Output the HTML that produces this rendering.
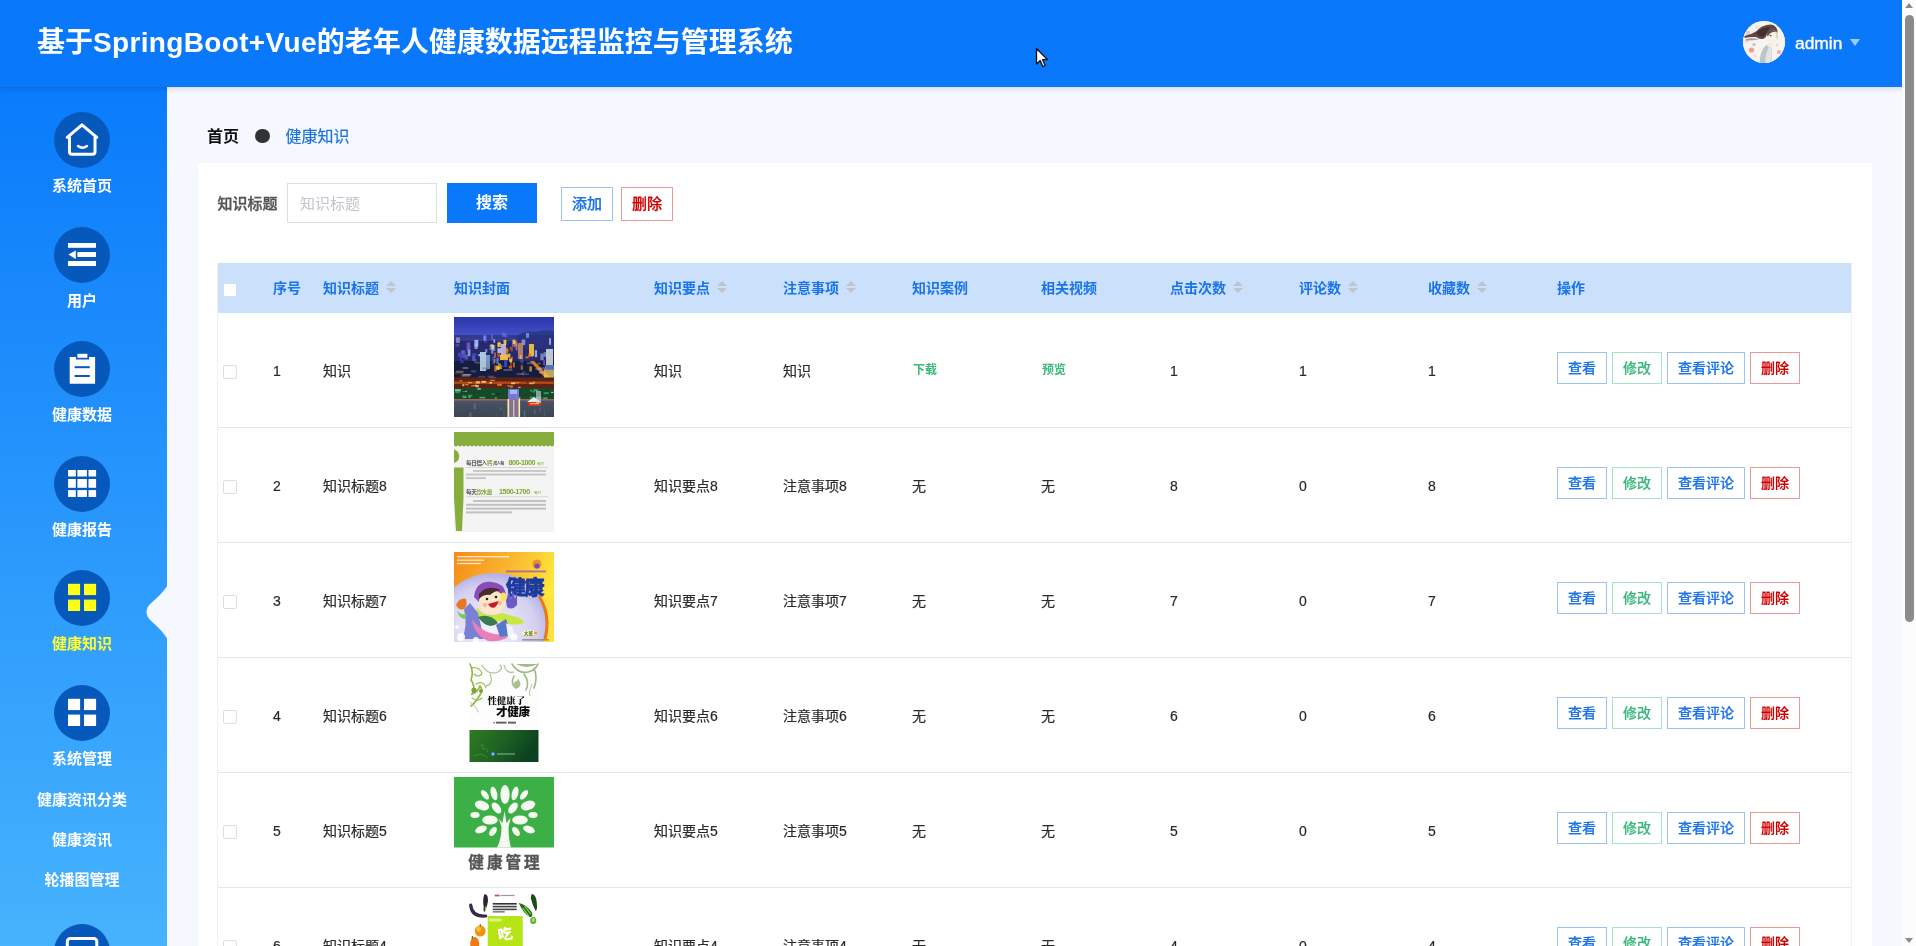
<!DOCTYPE html>
<html lang="zh-CN">
<head>
<meta charset="utf-8">
<title>基于SpringBoot+Vue的老年人健康数据远程监控与管理系统</title>
<style>
*{box-sizing:border-box;margin:0;padding:0}
html,body{width:1916px;height:946px;overflow:hidden;background:#f5f8fe}
body{position:relative;font-family:"Liberation Sans","Noto Sans CJK SC",sans-serif;font-size:14px;color:#333}
i{font-style:normal}
/* header */
#hdr{position:absolute;left:0;top:0;width:1902px;height:87px;background:#0978fb;box-shadow:0 1px 6px rgba(0,0,0,.17);z-index:5}
#title{position:absolute;left:37px;top:0;height:87px;line-height:86px;font-size:28px;font-weight:700;color:#fff;white-space:nowrap}
#title .lat{letter-spacing:.34px}
#avatar{position:absolute;left:1743px;top:21px;width:42px;height:42px;border-radius:50%;overflow:hidden;background:#f4ece8}
#avatar svg{display:block}
#uname{position:absolute;left:1795px;top:0;height:87px;line-height:86px;font-size:17.4px;font-weight:400;color:#fff;-webkit-text-stroke:.35px #fff}
#ucaret{position:absolute;left:1850px;top:39px;width:0;height:0;border-left:5px solid transparent;border-right:5px solid transparent;border-top:7px solid rgba(255,255,255,.62)}
/* scrollbar */
#sb{position:absolute;left:1902px;top:0;width:14px;height:946px;background:#fcfcfc;z-index:9}
#sb .thumb{position:absolute;left:3px;top:15px;width:9px;height:607px;border-radius:5px;background:#8b8b8b}
#sb .up{position:absolute;left:3px;top:3px;width:0;height:0;border-left:4.5px solid transparent;border-right:4.5px solid transparent;border-bottom:5px solid #8b8b8b}
/* sidebar */
#side{position:absolute;left:0;top:87px;width:167px;height:859px;background:linear-gradient(180deg,#0a7bfb 0%,#47b3fd 100%);z-index:2;overflow:hidden}
#side svg.ic{position:absolute;left:0;top:0}
.ml{position:absolute;left:0;width:164px;text-align:center;font-size:15px;font-weight:700;color:#fff;line-height:20px;white-space:nowrap}
.ml.on{color:#ffff33}
/* content */
#bc{position:absolute;left:207px;top:125px;height:24px;line-height:24px;font-size:16px;white-space:nowrap}
#bc b{color:#111;font-weight:700}
#bc .dot{position:absolute;left:48px;top:3.6px;width:14.6px;height:14.6px;border-radius:50%;background:#333}
#bc .cur{position:absolute;left:78.5px;top:0;color:#1a73d9;-webkit-text-stroke:.2px}
#card{position:absolute;left:198px;top:163px;width:1674px;height:800px;background:#fff}
#form{position:absolute;left:0;top:0;width:100%;height:80px}
#form label{position:absolute;left:19.5px;top:21px;height:40px;line-height:40px;font-size:15px;font-weight:500;color:#555;-webkit-text-stroke:.35px}
#form .inp{position:absolute;left:89px;top:20px;width:150px;height:40px;border:1px solid #dcdfe6;line-height:40px;padding-left:12px;color:#c0c4cc;font-size:15px}
#form .sbtn{position:absolute;left:249px;top:20px;width:90px;height:40px;background:#0978fb;color:#fff;font-size:16px;font-weight:700;text-align:center;line-height:40px}
#form .abtn{position:absolute;top:24px;width:52px;height:34px;border:1px solid;text-align:center;line-height:32px;font-size:15px;font-weight:500;background:#fff;-webkit-text-stroke:.25px}
#form .add{left:363px;color:#1a73e8;border-color:#9cc2f5}
#form .del{left:423px;color:#cc0000;border-color:#e79a9a}
/* table */
#tbl{position:absolute;left:19px;top:100px;width:1635px;height:760px;border-left:1px solid #eef1f7;border-right:1px solid #eef1f7}
.thead{position:absolute;left:0;top:0;width:1633px;height:50px;background:#cbe1fb}
.th{position:absolute;top:0;height:50px;line-height:51px;font-weight:700;color:#1a73e8;white-space:nowrap}
.sort{display:inline-block;position:relative;width:24px;height:34px;vertical-align:middle}
.sort i{position:absolute;left:7px;width:0;height:0;border:5px solid transparent}
.sort .up{top:4px;border-bottom-color:#c0c4cc}
.sort .dn{bottom:8px;border-top-color:#c0c4cc}
.cb{position:absolute;width:14px;height:14px;background:#fff;border:1px solid #dedede;border-radius:2px}
.hcb{left:6px;top:21px;width:12px;height:12px;border:0;border-radius:0}
.rcb{left:5px;top:52px}
.tr{position:absolute;left:0;width:1633px;height:115px;border-bottom:1px solid #dfe8f5}
.td{position:absolute;top:0;height:115px;line-height:117px;white-space:nowrap;color:#2a2a2a;-webkit-text-stroke:.2px #2a2a2a}
.td.lk{font-size:12px;font-weight:700;color:#3cb87e;line-height:115px;-webkit-text-stroke:0}
.pic{position:absolute;left:236px;top:4px;width:100px;height:100px;overflow:hidden}
.pic svg{display:block}
.ops{position:absolute;left:1339px;top:39px;height:32px;white-space:nowrap;font-size:0}
.btn{display:inline-block;height:32px;line-height:30px;padding:0 10px;border:1px solid;font-size:14px;font-weight:500;margin-right:5px;background:#fff;vertical-align:top;-webkit-text-stroke:.2px}
.btn.b{color:#1a73e8;border-color:#9cc2f5}
.btn.g{color:#3cb87e;border-color:#a8e2c6}
.btn.r{color:#cc0000;border-color:#e79a9a}

#hdr,#side,#main{will-change:transform}
#main{position:absolute;left:0;top:0;width:1902px;height:946px}
#cursor{position:absolute;left:1035px;top:47px;z-index:20}
#sb .dn{position:absolute;left:3px;top:938px;width:0;height:0;border-left:4.5px solid transparent;border-right:4.5px solid transparent;border-top:5px solid #8b8b8b}

</style>
</head>
<body>
<div id="hdr">
  <div id="title">基于<span class="lat">SpringBoot+Vue</span>的老年人健康数据远程监控与管理系统</div>
  <div id="avatar"><svg width="42" height="42" viewBox="0 0 42 42"><defs><filter id="avb" x="-10%" y="-10%" width="120%" height="120%"><feGaussianBlur stdDeviation=".7"/></filter></defs><rect width="42" height="42" fill="#f7f3f1"/><g filter="url(#avb)"><circle cx="5" cy="12" r="2.2" fill="#f0b8b4" opacity=".8"/><circle cx="8.5" cy="29" r="2.6" fill="#ee8f88" opacity=".85"/><circle cx="36" cy="31" r="2" fill="#ee9a92" opacity=".8"/><circle cx="26" cy="33.5" r="1.5" fill="#e87878" opacity=".8"/><circle cx="3.5" cy="20" r="2" fill="#f4cfc8" opacity=".8"/><circle cx="11" cy="23.5" r="1.6" fill="#7a8aa8" opacity=".5"/><circle cx="14" cy="6" r="2" fill="#f6dcd8" opacity=".7"/><circle cx="34" cy="24" r="1.5" fill="#f4c8c0" opacity=".7"/><circle cx="12" cy="35" r="2" fill="#f8dcd4" opacity=".8"/><path d="M1.5 15 Q8 13.5 13 10.5 Q19 3.5 28 3.5 Q35 5 34.5 12 Q31 7.5 27 9 Q25 15 21 17.5 Q17 19 13 16 Q7 15.5 1.5 17 Z" fill="#5c4644"/><path d="M13 12 Q19 6 27 6 Q25 12 20 15.5 Q16 16 13 12 Z" fill="#43302f"/><path d="M3 18 Q10 16.5 16 18.5 Q10 19.5 3 19.5 Z" fill="#8a7674" opacity=".7"/><ellipse cx="28.3" cy="16" rx="5.2" ry="6.6" fill="#faf1e6"/><path d="M23.5 11 Q28 6.5 34 11 Q30 10 27 12.5 Q25.5 15 24 15 Z" fill="#6a5048"/><path d="M33 10 Q36 14 34.5 20 Q33 16 32.5 12 Z" fill="#d8c8a8" opacity=".8"/><ellipse cx="27.6" cy="14.6" rx="1.1" ry=".7" fill="#3a3030"/><path d="M16.5 42 Q17 29 23.5 24 L29 25.5 Q28 33 29 42 Z" fill="#b9c5c8"/><path d="M22 42 Q22.5 32 26 26 L29 26.5 Q27.5 35 28.5 42 Z" fill="#dfe5e4"/><path d="M25 22 L30 23 L29 27 L24.5 25.5 Z" fill="#f6ece2"/></g></svg></div>
  <div id="uname">admin</div>
  <div id="ucaret"></div>
</div>
<svg id="cursor" width="14" height="21" viewBox="0 0 14 21"><path d="M1.5 1.5 V17 L5.2 13.6 L7.8 19.6 L10.2 18.5 L7.6 12.7 H12.6 Z" fill="#fff" stroke="#111" stroke-width="1.3" stroke-linejoin="round"/></svg>
<div id="sb"><div class="up"></div><div class="thumb"></div><div class="dn"></div></div>
<div id="side">
<svg class="ic" width="167" height="859" viewBox="0 87 167 859">
  <g fill="#0659bb">
    <circle cx="82" cy="140" r="28"/><circle cx="82" cy="255" r="28"/><circle cx="82" cy="369" r="28"/>
    <circle cx="82" cy="484" r="28"/><circle cx="82" cy="598" r="28"/><circle cx="82" cy="713" r="28"/>
    <circle cx="82" cy="952" r="28"/>
  </g>
  <!-- home -->
  <g fill="none" stroke="#fff" stroke-width="3" stroke-linecap="round" stroke-linejoin="round">
    <path d="M67.2 137.4 L82 124.8 L96.8 137.4"/>
    <path d="M69.5 137.5 V151.8 Q69.5 154.3 72 154.3 H92.5 Q95 154.3 95 151.8 V137.5"/>
    <path d="M78 146 Q82.5 149.5 87 146" stroke-width="2.4"/>
  </g>
  <!-- fold -->
  <g fill="#fff">
    <rect x="68" y="243" width="28" height="4.8"/><rect x="77.4" y="252" width="18.6" height="5"/><rect x="68" y="261" width="28" height="5"/>
    <path d="M68.4 254.6 L75.8 250.4 V258.9 Z"/>
  </g>
  <!-- order -->
  <g fill="#fff">
    <rect x="77.4" y="353.8" width="10" height="4"/>
    <path d="M69.7 357 H76 V359.5 H89 V357 H95.1 V383.7 H69.7 Z"/>
  </g>
  <g fill="#0659bb"><rect x="74.6" y="366.2" width="15.2" height="2"/><rect x="74.6" y="375" width="15.2" height="2"/></g>
  <!-- grid -->
  <g fill="#fff">
    <rect x="68.1" y="470" width="7.7" height="6.5"/><rect x="77.4" y="470" width="9.5" height="6.5"/><rect x="88.5" y="470" width="7.6" height="6.5"/>
    <rect x="68.1" y="479" width="7.7" height="8.8"/><rect x="77.4" y="479" width="9.5" height="8.8"/><rect x="88.5" y="479" width="7.6" height="8.8"/>
    <rect x="68.1" y="490.1" width="7.7" height="6.9"/><rect x="77.4" y="490.1" width="9.5" height="6.9"/><rect x="88.5" y="490.1" width="7.6" height="6.9"/>
  </g>
  <!-- menu active -->
  <g fill="#ffff1a">
    <rect x="68" y="583.8" width="12.1" height="11.3"/><rect x="84" y="583.8" width="12.1" height="11.3"/>
    <rect x="68" y="599.6" width="12.1" height="11.4"/><rect x="84" y="599.6" width="12.1" height="11.4"/>
  </g>
  <g fill="#fff">
    <rect x="68" y="698.8" width="12.1" height="11.3"/><rect x="84" y="698.8" width="12.1" height="11.3"/>
    <rect x="68" y="714.6" width="12.1" height="11.4"/><rect x="84" y="714.6" width="12.1" height="11.4"/>
  </g>
  <!-- monitor -->
  <rect x="67.3" y="938.5" width="29.5" height="22" rx="3" fill="none" stroke="#fff" stroke-width="3"/>
  <!-- notch -->
  <path d="M167.5 585.5 C160 597 150.5 602 147.5 607.5 Q145.5 612 147.5 616.5 C150.5 622 160 627 167.5 639 Z" fill="#f5f8fe"/>
</svg>
<div class="ml" style="top:89px">系统首页</div>
<div class="ml" style="top:204px">用户</div>
<div class="ml" style="top:318px">健康数据</div>
<div class="ml" style="top:433px">健康报告</div>
<div class="ml on" style="top:547px">健康知识</div>
<div class="ml" style="top:662px">系统管理</div>
<div class="ml" style="top:703px">健康资讯分类</div>
<div class="ml" style="top:743px">健康资讯</div>
<div class="ml" style="top:783px">轮播图管理</div>
</div>

<div id="main">
  <div id="bc"><b>首页</b><i class="dot"></i><span class="cur">健康知识</span></div>
  <div id="card">
    <div id="form">
      <label>知识标题</label>
      <div class="inp"><span>知识标题</span></div>
      <div class="sbtn">搜索</div>
      <div class="abtn add">添加</div>
      <div class="abtn del">删除</div>
    </div>
    <div id="tbl">
<div class="thead">
<span class="cb hcb"></span>
<span class="th" style="left:55px">序号</span>
<span class="th" style="left:105px">知识标题<i class="sort"><i class="up"></i><i class="dn"></i></i></span>
<span class="th" style="left:236px">知识封面</span>
<span class="th" style="left:436px">知识要点<i class="sort"><i class="up"></i><i class="dn"></i></i></span>
<span class="th" style="left:565px">注意事项<i class="sort"><i class="up"></i><i class="dn"></i></i></span>
<span class="th" style="left:694px">知识案例</span>
<span class="th" style="left:823px">相关视频</span>
<span class="th" style="left:952px">点击次数<i class="sort"><i class="up"></i><i class="dn"></i></i></span>
<span class="th" style="left:1081px">评论数<i class="sort"><i class="up"></i><i class="dn"></i></i></span>
<span class="th" style="left:1210px">收藏数<i class="sort"><i class="up"></i><i class="dn"></i></i></span>
<span class="th" style="left:1339px">操作</span>
</div>

<div class="tr" style="top:50px">
<span class="cb rcb"></span>
<span class="td" style="left:55px">1</span><span class="td" style="left:105px">知识</span>
<div class="pic"><svg width="100" height="100" viewBox="0 0 100 100"><defs><linearGradient id="sky" x1="0" y1="0" x2="0" y2="1"><stop offset="0" stop-color="#2a36a6"/><stop offset=".65" stop-color="#3f4cc4"/><stop offset="1" stop-color="#6a63c8"/></linearGradient><linearGradient id="riv" x1="0" y1="0" x2="0" y2="1"><stop offset="0" stop-color="#4a5568"/><stop offset="1" stop-color="#3b4652"/></linearGradient><filter id="b1" x="-5%" y="-5%" width="110%" height="110%"><feGaussianBlur stdDeviation=".6"/></filter></defs><rect width="100" height="100" fill="#1a2048"/><g filter="url(#b1)"><rect x="-3" y="-3" width="106" height="106" fill="#1a2048"/><rect width="100" height="24" fill="url(#sky)"/><path d="M62 20 Q70 13 80 15 Q90 12 100 14 V32 H70 Z" fill="#2b3a8c"/><rect y="18" width="100" height="30" fill="#2a2f7a" opacity=".75"/><rect y="44" width="100" height="18" fill="#171c3c" opacity=".9"/><rect x="43.4" y="31.2" width="3.8" height="4.8" fill="#c9d4ff" opacity="0.83"/><rect x="18.2" y="38.3" width="2.7" height="5.7" fill="#7f8cf0" opacity="0.49"/><rect x="29.1" y="17.6" width="3.5" height="6.2" fill="#5a6ee0" opacity="0.72"/><rect x="38" y="28.1" width="3.3" height="5.9" fill="#c9d4ff" opacity="0.46"/><rect x="50.7" y="16.7" width="2" height="3.5" fill="#5a6ee0" opacity="0.8"/><rect x="31.3" y="32.1" width="2" height="3.4" fill="#aab8ff" opacity="0.67"/><rect x="63.6" y="28.3" width="2.2" height="8" fill="#4c5ad6" opacity="0.49"/><rect x="24.4" y="37" width="2.8" height="2.2" fill="#c9d4ff" opacity="0.79"/><rect x="38.4" y="39.6" width="2.5" height="7.7" fill="#4c5ad6" opacity="0.76"/><rect x="20.5" y="41.9" width="1.6" height="4.3" fill="#8060d8" opacity="0.63"/><rect x="7" y="33.3" width="3.4" height="3.6" fill="#5a6ee0" opacity="0.59"/><rect x="1.5" y="26.9" width="3.8" height="2.8" fill="#8060d8" opacity="0.5"/><rect x="5.7" y="38.1" width="1.9" height="5.4" fill="#3d4bd0" opacity="0.68"/><rect x="94.6" y="37.3" width="2.5" height="4.3" fill="#3d4bd0" opacity="0.64"/><rect x="20.4" y="22.8" width="3.9" height="6.8" fill="#aab8ff" opacity="0.9"/><rect x="1.9" y="20.4" width="4" height="5.6" fill="#c9d4ff" opacity="0.5"/><rect x="95" y="21.2" width="2.1" height="6.6" fill="#aab8ff" opacity="0.82"/><rect x="37.1" y="17.2" width="2" height="5.8" fill="#5a6ee0" opacity="0.72"/><rect x="35.7" y="28.1" width="3.9" height="4.9" fill="#c9d4ff" opacity="0.51"/><rect x="37.1" y="33.2" width="2.3" height="3.4" fill="#c9d4ff" opacity="0.56"/><rect x="18.2" y="36.4" width="3.9" height="3.2" fill="#3d4bd0" opacity="0.85"/><rect x="57.9" y="27.2" width="1.8" height="2.2" fill="#aab8ff" opacity="0.56"/><rect x="67.6" y="22.5" width="3.6" height="5.6" fill="#aab8ff" opacity="0.68"/><rect x="89.2" y="43.3" width="1.8" height="4.9" fill="#8060d8" opacity="0.83"/><rect x="59" y="23.1" width="3.8" height="3.2" fill="#5a6ee0" opacity="0.48"/><rect x="39.5" y="22.2" width="1.6" height="3.7" fill="#c9d4ff" opacity="0.71"/><rect x="12.6" y="25.5" width="3.7" height="7.9" fill="#8060d8" opacity="0.78"/><rect x="50.1" y="42.5" width="3" height="7.5" fill="#3d4bd0" opacity="0.86"/><rect x="67.3" y="42.9" width="1.6" height="5.8" fill="#3d4bd0" opacity="0.48"/><rect x="29.9" y="19" width="1.7" height="4.7" fill="#aab8ff" opacity="0.78"/><rect x="86.4" y="36.4" width="3.3" height="6.8" fill="#aab8ff" opacity="0.61"/><rect x="65.8" y="41.1" width="3.7" height="4.5" fill="#4c5ad6" opacity="0.46"/><rect x="48" y="15.4" width="3.2" height="4.3" fill="#5a6ee0" opacity="0.72"/><rect x="7.7" y="33.5" width="4" height="7.3" fill="#8060d8" opacity="0.6"/><rect x="89.7" y="35.1" width="2.6" height="4.8" fill="#c9d4ff" opacity="0.49"/><rect x="72" y="15.9" width="3" height="4.9" fill="#7f8cf0" opacity="0.88"/><rect x="10.8" y="37.6" width="3.2" height="4.9" fill="#5a6ee0" opacity="0.62"/><rect x="13.7" y="32.7" width="2.8" height="6.5" fill="#aab8ff" opacity="0.75"/><rect x="42.4" y="40.9" width="2.3" height="6" fill="#7f8cf0" opacity="0.74"/><rect x="77.2" y="36.9" width="2" height="3.3" fill="#7f8cf0" opacity="0.71"/><rect x="30.4" y="18.9" width="2.7" height="7" fill="#4c5ad6" opacity="0.47"/><rect x="6.2" y="43.4" width="3.6" height="2.7" fill="#3d4bd0" opacity="0.57"/><rect x="20.6" y="27" width="3.1" height="5" fill="#aab8ff" opacity="0.77"/><rect x="80.8" y="33.1" width="2.3" height="7" fill="#aab8ff" opacity="0.84"/><rect x="4" y="35.6" width="2.9" height="3.9" fill="#4c5ad6" opacity="0.7"/><rect x="61.5" y="26.8" width="2" height="6.6" fill="#aab8ff" opacity="0.56"/><rect x="26" y="35" width="6" height="19" fill="#b9d6e8" opacity="0.9"/><rect x="32" y="38" width="4" height="14" fill="#8fb0d8" opacity="0.8"/><rect x="47" y="27" width="5" height="14" fill="#c8c8f0" opacity="0.85"/><rect x="92" y="32" width="7" height="16" fill="#cfd8d8" opacity="0.9"/><rect x="75" y="27" width="5" height="12" fill="#f0c040" opacity="0.95"/><rect x="64" y="26" width="5" height="16" fill="#d89060" opacity="0.8"/><rect x="56.8" y="39.6" width="2.2" height="4.3" fill="#e85010" opacity="0.81"/><rect x="57.2" y="32.3" width="1.4" height="2.4" fill="#ff6a10" opacity="0.65"/><rect x="51.6" y="37" width="1.3" height="2.5" fill="#ffd24a" opacity="0.77"/><rect x="40.3" y="48.5" width="2.4" height="6" fill="#ff8a18" opacity="0.71"/><rect x="60.1" y="24.4" width="3.3" height="4.8" fill="#ff8a18" opacity="0.73"/><rect x="36.1" y="27.5" width="3.2" height="1.5" fill="#ffe27a" opacity="0.78"/><rect x="66.7" y="48.4" width="2.3" height="4.4" fill="#ff8a18" opacity="0.59"/><rect x="44" y="46.3" width="3" height="5.7" fill="#ffb020" opacity="0.64"/><rect x="75.4" y="49.4" width="2.4" height="5.1" fill="#ffd24a" opacity="0.65"/><rect x="40.2" y="42.1" width="1.2" height="3.8" fill="#ffb020" opacity="0.73"/><rect x="40.4" y="35.6" width="1.3" height="5.1" fill="#ffb020" opacity="0.72"/><rect x="50.2" y="23" width="2.4" height="4.6" fill="#ff8a18" opacity="0.74"/><rect x="74.3" y="36.5" width="2.8" height="3.5" fill="#ff6a10" opacity="0.78"/><rect x="55" y="41.3" width="2.9" height="3.5" fill="#ffe27a" opacity="0.67"/><rect x="53.3" y="36.6" width="3.1" height="4" fill="#ffd24a" opacity="0.82"/><rect x="42.3" y="48.7" width="3.2" height="4.2" fill="#ffd24a" opacity="0.89"/><rect x="65.8" y="38" width="1.7" height="3.9" fill="#ffe27a" opacity="0.55"/><rect x="52.8" y="32.6" width="2.4" height="1.7" fill="#ff6a10" opacity="0.77"/><rect x="59.6" y="24.6" width="1.6" height="5.7" fill="#ff6a10" opacity="0.72"/><rect x="54.7" y="48.8" width="3.3" height="2.7" fill="#ff6a10" opacity="0.75"/><rect x="44.7" y="48.2" width="3.3" height="3.9" fill="#ffb020" opacity="0.63"/><rect x="71.4" y="39.3" width="3.3" height="2.1" fill="#ffb020" opacity="0.56"/><rect x="55.8" y="30" width="2.9" height="2.6" fill="#ff6a10" opacity="0.59"/><rect x="56.2" y="42.5" width="1.5" height="3.8" fill="#ffd24a" opacity="0.84"/><rect x="49.4" y="22.7" width="2.7" height="5.2" fill="#ffe27a" opacity="0.61"/><rect x="37.4" y="27.7" width="2.7" height="4.4" fill="#ffe27a" opacity="0.64"/><rect x="43.5" y="25.8" width="3.3" height="4.3" fill="#ffd24a" opacity="0.91"/><rect x="51.8" y="30.8" width="1.9" height="5.7" fill="#ff8a18" opacity="0.86"/><rect x="56.4" y="46.9" width="1.5" height="1.9" fill="#ff6a10" opacity="0.59"/><rect x="58.8" y="45.3" width="2.2" height="5.1" fill="#ff8a18" opacity="0.63"/><rect x="43.8" y="24.7" width="2.5" height="3.1" fill="#ffd24a" opacity="0.6"/><rect x="43.4" y="36.2" width="2.9" height="3.8" fill="#e85010" opacity="0.88"/><rect x="58.4" y="22.7" width="3" height="4.3" fill="#ffe27a" opacity="0.74"/><rect x="45.2" y="27.3" width="1.5" height="2.3" fill="#ff8a18" opacity="0.95"/><rect x="46" y="38" width="8" height="5" fill="#ffc030" opacity="0.95"/><path d="M76 44 L92 62 L98 62 L80 44 Z" fill="#ff8a20" opacity=".85"/><rect x="90" y="52" width="10" height="10" fill="#e8c860" opacity="0.8"/><rect x="91" y="48" width="9" height="5" fill="#5a7ac8" opacity="0.9"/><rect x="83.4" y="45.5" width="3.4" height="2.1" fill="#d8a070" opacity="0.38"/><rect x="8.7" y="50.3" width="5.6" height="1.4" fill="#c0c4d8" opacity="0.56"/><rect x="1.2" y="55.2" width="8.1" height="1.2" fill="#d8a070" opacity="0.48"/><rect x="33.3" y="58.7" width="6.6" height="1.1" fill="#8a90b0" opacity="0.46"/><rect x="7.6" y="57.5" width="8.3" height="2.1" fill="#d8a070" opacity="0.55"/><rect x="17.2" y="53.4" width="5" height="1.9" fill="#5a6088" opacity="0.67"/><rect x="67" y="56.4" width="7.9" height="1.5" fill="#5a6088" opacity="0.66"/><rect x="62.5" y="56.3" width="7.6" height="1.5" fill="#c0c4d8" opacity="0.37"/><rect x="30.8" y="51.5" width="3.1" height="1.4" fill="#8a90b0" opacity="0.43"/><rect x="85" y="54.7" width="5" height="1.8" fill="#c0c4d8" opacity="0.54"/><rect x="35.1" y="60" width="6.9" height="1.8" fill="#d8a070" opacity="0.69"/><rect x="2.1" y="53.8" width="7.4" height="1.3" fill="#d8a070" opacity="0.53"/><rect x="68.5" y="54.4" width="3.1" height="1.3" fill="#5a6088" opacity="0.67"/><rect x="49.5" y="52.1" width="8.8" height="1.7" fill="#8a90b0" opacity="0.57"/><rect x="72.9" y="45.2" width="6.6" height="1.9" fill="#8a90b0" opacity="0.49"/><rect x="84.5" y="50.2" width="8.8" height="2" fill="#8a90b0" opacity="0.5"/><rect x="44.5" y="48.6" width="5.4" height="1.4" fill="#5a6088" opacity="0.52"/><rect x="24.3" y="58.9" width="7" height="1.9" fill="#8a90b0" opacity="0.35"/><rect x="22.1" y="44.7" width="3.9" height="1.9" fill="#d8a070" opacity="0.37"/><rect x="28.4" y="50.4" width="6.5" height="1.9" fill="#5a6088" opacity="0.38"/><rect x="81.5" y="50.9" width="5.9" height="2.2" fill="#c0c4d8" opacity="0.37"/><rect x="8.9" y="57" width="8.5" height="1.2" fill="#c0c4d8" opacity="0.56"/><rect x="0" y="60.5" width="100" height="10.5" fill="#5c2416"/><rect x="0" y="64.5" width="100" height="2.4" fill="#d8581a" opacity="0.7"/><rect x="11.3" y="67" width="3.1" height="1.3" fill="#ffb040" opacity="0.74"/><rect x="15.2" y="64.9" width="2" height="1.6" fill="#7a2810" opacity="0.7"/><rect x="57.1" y="65.4" width="4.2" height="1.8" fill="#ffd070" opacity="0.98"/><rect x="72" y="63.9" width="1.9" height="2.3" fill="#7a2810" opacity="0.85"/><rect x="35.2" y="64.2" width="3.9" height="1.8" fill="#7a2810" opacity="0.68"/><rect x="27.3" y="63.9" width="4.8" height="1.8" fill="#ffd070" opacity="0.95"/><rect x="3.9" y="62.5" width="2.4" height="1.6" fill="#7a2810" opacity="0.62"/><rect x="21.8" y="64.2" width="4.1" height="2.4" fill="#ffd070" opacity="0.82"/><rect x="61.8" y="65" width="3.2" height="1.3" fill="#ff8a20" opacity="0.8"/><rect x="13.1" y="69" width="4.3" height="1.7" fill="#7a2810" opacity="0.94"/><rect x="75.4" y="65.6" width="4.1" height="1.6" fill="#ffd070" opacity="0.75"/><rect x="64.1" y="69.9" width="2.6" height="1.8" fill="#ffd070" opacity="0.77"/><rect x="36.2" y="62.8" width="4.6" height="1.1" fill="#ffb040" opacity="0.77"/><rect x="55.7" y="68.5" width="3.1" height="2.2" fill="#ffb040" opacity="0.63"/><rect x="20.9" y="67.3" width="1.8" height="1.5" fill="#ff8a20" opacity="0.71"/><rect x="14" y="64.9" width="4" height="1.5" fill="#ffb040" opacity="0.73"/><rect x="43.2" y="66.8" width="4.7" height="2" fill="#ff8a20" opacity="0.78"/><rect x="78.7" y="64.4" width="2.6" height="1.6" fill="#7a2810" opacity="0.7"/><rect x="35.4" y="64.9" width="2.8" height="1.6" fill="#ffe8a0" opacity="0.92"/><rect x="72.4" y="64.9" width="2.9" height="1.2" fill="#7a2810" opacity="0.83"/><rect x="17.3" y="68.1" width="4.6" height="1.4" fill="#ffb040" opacity="0.69"/><rect x="5.7" y="63.3" width="2.5" height="1" fill="#ffe8a0" opacity="0.63"/><rect x="53.6" y="68.3" width="1.8" height="1.1" fill="#ffb040" opacity="0.96"/><rect x="8.3" y="67.1" width="2" height="2.1" fill="#ffe8a0" opacity="0.7"/><rect x="21.6" y="68.1" width="3.3" height="2.1" fill="#ffe8a0" opacity="0.74"/><rect x="79.1" y="64.7" width="2" height="1.7" fill="#ffb040" opacity="0.88"/><rect x="0" y="71" width="100" height="11" fill="#154a2c"/><rect x="89.7" y="75.1" width="5.2" height="2" fill="#38a058" opacity="0.86"/><rect x="81.7" y="79.9" width="5.8" height="2" fill="#58c070" opacity="0.66"/><rect x="1" y="72.1" width="5.7" height="2.4" fill="#8fd8a0" opacity="0.83"/><rect x="97.1" y="74.8" width="2.3" height="1.3" fill="#d0e8d0" opacity="0.74"/><rect x="26.9" y="79.9" width="3.6" height="2.1" fill="#0f3820" opacity="0.79"/><rect x="76" y="72.8" width="1.8" height="1.7" fill="#58c070" opacity="0.72"/><rect x="78.4" y="74.1" width="2.4" height="1.5" fill="#58c070" opacity="0.61"/><rect x="70.3" y="76.9" width="2.5" height="1.3" fill="#0f3820" opacity="0.68"/><rect x="89.2" y="80.4" width="4.3" height="2.4" fill="#58c070" opacity="0.72"/><rect x="25.5" y="79.9" width="5.6" height="1.5" fill="#58c070" opacity="0.85"/><rect x="9.1" y="79.6" width="3.3" height="1.3" fill="#8fd8a0" opacity="0.86"/><rect x="37.7" y="76.3" width="3.8" height="1.4" fill="#38a058" opacity="0.8"/><rect x="23.3" y="71.1" width="3.6" height="1.6" fill="#8fd8a0" opacity="0.82"/><rect x="59.4" y="72.6" width="2.2" height="1.5" fill="#0f3820" opacity="0.91"/><rect x="79.4" y="72.3" width="4.8" height="1.9" fill="#58c070" opacity="0.74"/><rect x="14.8" y="78.7" width="1.5" height="2.2" fill="#8fd8a0" opacity="0.87"/><rect x="8.1" y="73.7" width="4.7" height="1.1" fill="#d0e8d0" opacity="0.81"/><rect x="8.1" y="78.5" width="3.9" height="1.8" fill="#38a058" opacity="0.86"/><rect x="40.9" y="80.2" width="1.9" height="2.2" fill="#8fd8a0" opacity="0.52"/><rect x="40.5" y="75.9" width="5.8" height="2.4" fill="#0f3820" opacity="0.64"/><rect x="7.5" y="74.1" width="3.6" height="2.1" fill="#0f3820" opacity="0.53"/><rect x="13.8" y="77.7" width="4.5" height="2.1" fill="#38a058" opacity="0.79"/><rect x="1.2" y="74.8" width="4.7" height="1.4" fill="#58c070" opacity="0.55"/><rect x="75.6" y="79.6" width="5.3" height="2.1" fill="#58c070" opacity="0.57"/><rect x="61.5" y="80.4" width="4.9" height="2.4" fill="#d0e8d0" opacity="0.75"/><rect x="8.5" y="72.9" width="3.2" height="1.2" fill="#0f3820" opacity="0.93"/><rect x="0" y="82" width="100" height="18" fill="url(#riv)"/><rect x="0" y="82" width="100" height="1.6" fill="#c86a50" opacity="0.7"/><rect x="54" y="94.9" width="1.5" height="8" fill="#7a88a8" opacity="0.33"/><rect x="59.7" y="86" width="1.9" height="4.1" fill="#7a88a8" opacity="0.42"/><rect x="80.3" y="92.9" width="1.1" height="4.4" fill="#7a88a8" opacity="0.6"/><rect x="41.6" y="95.6" width="1.5" height="7.9" fill="#5a6a80" opacity="0.34"/><rect x="19.7" y="86.2" width="2" height="5.9" fill="#8a7a90" opacity="0.49"/><rect x="69.8" y="93.2" width="1.5" height="7.7" fill="#7a88a8" opacity="0.5"/><rect x="58.4" y="84.3" width="1.5" height="5.1" fill="#5a6a80" opacity="0.43"/><rect x="53.5" y="87.1" width="1.5" height="4.8" fill="#7a88a8" opacity="0.48"/><rect x="15.2" y="95.5" width="2.4" height="6.3" fill="#8a7a90" opacity="0.48"/><rect x="49.3" y="92.6" width="1.3" height="8.6" fill="#5a6a80" opacity="0.51"/><rect x="89.8" y="92.5" width="1" height="7" fill="#7a88a8" opacity="0.34"/><rect x="45.9" y="90.3" width="1.5" height="3.6" fill="#8a7a90" opacity="0.38"/><rect x="84.8" y="90.8" width="2.1" height="4.4" fill="#5a6a80" opacity="0.46"/><rect x="53.8" y="92.4" width="1.4" height="8.5" fill="#8a7a90" opacity="0.48"/><rect x="54" y="72" width="11" height="10" fill="#7a78e0" opacity="0.95"/><rect x="56" y="73" width="7" height="4" fill="#b8b8ff" opacity="0.9"/><rect x="55" y="82" width="10" height="18" fill="#8a7890" opacity="0.9"/><rect x="53.5" y="82" width="1.6" height="18" fill="#ffe8b0"/><rect x="64.5" y="82" width="1.6" height="18" fill="#ffe8b0"/><rect x="59" y="83" width="1.4" height="17" fill="#e8c8d8" opacity="0.8"/><path d="M73 85 L80 80 L87 85 Z" fill="#e8e8f0"/><rect x="74" y="85" width="13" height="4" fill="#c83828"/><rect x="76" y="86" width="9" height="1.2" fill="#ffb060"/><rect x="82" y="74" width="5" height="12" fill="#d8d8e8" opacity="0.6"/></g></svg></div>
<span class="td" style="left:436px">知识</span><span class="td" style="left:565px">知识</span>
<span class="td lk" style="left:695px">下载</span><span class="td lk" style="left:824px">预览</span>
<span class="td" style="left:952px">1</span><span class="td" style="left:1081px">1</span><span class="td" style="left:1210px">1</span>
<div class="ops"><span class="btn b">查看</span><span class="btn g">修改</span><span class="btn b">查看评论</span><span class="btn r">删除</span></div>
</div>
<div class="tr" style="top:165px">
<span class="cb rcb"></span>
<span class="td" style="left:55px">2</span><span class="td" style="left:105px">知识标题8</span>
<div class="pic"><svg width="100" height="100" viewBox="0 0 100 100" font-family="Liberation Sans,Noto Sans CJK SC,sans-serif"><rect width="100" height="100" fill="#f4f4f4"/><rect width="100" height="13.5" fill="#86ae3c"/><path d="M0 13 L0 13 L2 14.8 L4 13 L6 14.8 L8 13 L10 14.8 L12 13 L14 14.8 L16 13 L18 14.8 L20 13 L22 14.8 L24 13 L26 14.8 L28 13 L30 14.8 L32 13 L34 14.8 L36 13 L38 14.8 L40 13 L42 14.8 L44 13 L46 14.8 L48 13 L50 14.8 L52 13 L54 14.8 L56 13 L58 14.8 L60 13 L62 14.8 L64 13 L66 14.8 L68 13 L70 14.8 L72 13 L74 14.8 L76 13 L78 14.8 L80 13 L82 14.8 L84 13 L86 14.8 L88 13 L90 14.8 L92 13 L94 14.8 L96 13 L98 14.8 L100 13 V13 Z" fill="#86ae3c"/><path d="M0 17.5 A7 7 0 0 1 0 31 Z" fill="#86ae3c"/><path d="M0 35.5 H9.5 V66 L8 99 H2 L0 66 Z" fill="#86ae3c"/><text x="12" y="33" font-size="5.6" fill="#555" font-weight="700" letter-spacing="-.4">每日摄入<tspan fill="#7aa62e">钙</tspan> <tspan font-size="4">成人每</tspan></text><text x="54.5" y="33" font-size="7.2" fill="#7aa62e" font-weight="700" letter-spacing="-.5">800-1000</text><text x="83" y="33" font-size="3.6" fill="#8ab84a">毫克</text><rect x="12" y="35.2" width="82" height=".5" fill="#bbb"/><rect x="19" y="38" width="73" height="1.9" fill="#9a9a9a" opacity="0.5"/><rect x="12" y="41.6" width="80" height="1.9" fill="#9a9a9a" opacity="0.5"/><rect x="12" y="45.2" width="20" height="1.9" fill="#9a9a9a" opacity="0.5"/><text x="12" y="62" font-size="5.6" fill="#555" font-weight="700" letter-spacing="-.4">每天<tspan fill="#7aa62e">饮水量</tspan></text><text x="45" y="62" font-size="7.2" fill="#7aa62e" font-weight="700" letter-spacing="-.4">1500-1700</text><text x="80" y="62" font-size="3.8" fill="#8ab84a">毫升</text><rect x="12" y="64.6" width="82" height=".5" fill="#bbb"/><rect x="19" y="68" width="73" height="2" fill="#8e8e8e" opacity="0.5"/><rect x="12" y="71.8" width="80" height="2" fill="#8e8e8e" opacity="0.5"/><rect x="12" y="75.6" width="80" height="2" fill="#8e8e8e" opacity="0.5"/><rect x="12" y="79.4" width="46" height="2" fill="#8e8e8e" opacity="0.5"/></svg></div>
<span class="td" style="left:436px">知识要点8</span><span class="td" style="left:565px">注意事项8</span>
<span class="td" style="left:694px">无</span><span class="td" style="left:823px">无</span>
<span class="td" style="left:952px">8</span><span class="td" style="left:1081px">0</span><span class="td" style="left:1210px">8</span>
<div class="ops"><span class="btn b">查看</span><span class="btn g">修改</span><span class="btn b">查看评论</span><span class="btn r">删除</span></div>
</div>
<div class="tr" style="top:280px">
<span class="cb rcb"></span>
<span class="td" style="left:55px">3</span><span class="td" style="left:105px">知识标题7</span>
<div class="pic"><svg width="100" height="100" viewBox="0 0 100 100" font-family="Liberation Sans,Noto Sans CJK SC,sans-serif"><defs><linearGradient id="og" x1="0" y1="0" x2="1" y2=".35"><stop offset="0" stop-color="#f58a18"/><stop offset=".55" stop-color="#f9b830"/><stop offset="1" stop-color="#ffe83a"/></linearGradient><radialGradient id="lv" cx=".45" cy=".55" r=".6"><stop offset="0" stop-color="#f4f2fc"/><stop offset=".7" stop-color="#d4d0f0"/><stop offset="1" stop-color="#a8a4e0"/></radialGradient><clipPath id="c3"><rect x="0" y="5" width="100" height="90"/></clipPath></defs><rect width="100" height="100" fill="#fff"/><g clip-path="url(#c3)"><rect x="0" y="5" width="100" height="90" fill="url(#og)"/><ellipse cx="40" cy="78" rx="58" ry="52" fill="url(#lv)"/><path d="M86 50 Q97 70 90 95 H100 V50 Z" fill="#ffe040"/><path d="M85 49 Q97 68 91 92" fill="none" stroke="#e8781a" stroke-width="3"/><rect x="3" y="9" width="52" height="1.4" fill="#fff" opacity=".7"/><rect x="3" y="12.5" width="27" height="1.4" fill="#fff" opacity=".7"/><rect x="3" y="15.8" width="24" height="1.4" fill="#fff" opacity=".7"/><circle cx="83" cy="17" r="4.5" fill="#e89030"/><circle cx="83" cy="19" r="2.6" fill="#7a4ac0"/><rect x="52" y="23.5" width="40" height="1.8" fill="#9a5ab8" opacity=".8"/><text x="52" y="48" font-size="20" font-weight="700" fill="#1c3a9c" letter-spacing="-1.5" stroke="#1c3a9c" stroke-width=".9">健康</text><path d="M20 50 Q22 33 38 35 Q50 36 52 47 L46 50 Q36 40 26 56 Z" fill="#8a4ab8"/><ellipse cx="38" cy="55" rx="13" ry="11.5" fill="#ffe6c4"/><path d="M25 47 Q33 37 47 43 Q40 44 36 48 Q30 47 25 52 Z" fill="#4a2a30"/><ellipse cx="49.5" cy="50" rx="3" ry="4.5" fill="#ffe060"/><path d="M34 57 Q40 66 45 54 Z" fill="#c81830"/><circle cx="33" cy="52" r="1.3" fill="#222"/><circle cx="42" cy="50" r="1.3" fill="#222"/><circle cx="31" cy="58" r="2" fill="#ffb0a0"/><circle cx="46" cy="56" r="2" fill="#ffb0a0"/><path d="M23 60 Q30 72 48 66 L62 70 Q70 72 70 76 Q60 80 46 74 Q30 78 22 66 Z" fill="#c8e840"/><path d="M52 54 L55 44 L57 52 L59 43 L61 52 L63 45 L63 58 Q58 64 53 60 Z" fill="#6a5ac8"/><path d="M10 62 L16 56 L24 66 L30 92 H8 Q14 78 10 62 Z" fill="#7a80d8"/><path d="M2 58 Q6 50 12 52 Q14 58 10 62 Q5 64 2 58 Z" fill="#e87820"/><path d="M3 64 Q10 70 13 66 L11 72 Q6 72 3 64 Z" fill="#7ac850"/><path d="M18 72 Q32 92 58 86 Q50 96 34 94 Q20 88 18 72 Z" fill="#e880b8"/><path d="M24 70 Q36 66 44 76 Q34 84 24 70 Z" fill="#3a7a50"/><path d="M42 78 L52 72 L58 88 L46 90 Z" fill="#5a78c8"/><path d="M52 76 L58 80 L62 92 L54 90 Z" fill="#f0f4ff"/><circle cx="7" cy="90" r="4" fill="#fff" opacity=".9"/><circle cx="22" cy="93" r="3" fill="#fff" opacity=".85"/><circle cx="60" cy="90" r="3.5" fill="#fff" opacity=".8"/><circle cx="3" cy="80" r="2" fill="#fff" opacity=".8"/><ellipse cx="75" cy="86" rx="7" ry="3" fill="#fff8c0"/><text x="70" y="87.6" font-size="4.4" font-weight="700" fill="#2a6a30">大班</text><circle cx="81.5" cy="86" r="1.6" fill="#f0a020"/><rect x="68" y="92" width="27" height="1.6" fill="#8a7a60" opacity=".7"/></g></svg></div>
<span class="td" style="left:436px">知识要点7</span><span class="td" style="left:565px">注意事项7</span>
<span class="td" style="left:694px">无</span><span class="td" style="left:823px">无</span>
<span class="td" style="left:952px">7</span><span class="td" style="left:1081px">0</span><span class="td" style="left:1210px">7</span>
<div class="ops"><span class="btn b">查看</span><span class="btn g">修改</span><span class="btn b">查看评论</span><span class="btn r">删除</span></div>
</div>
<div class="tr" style="top:395px">
<span class="cb rcb"></span>
<span class="td" style="left:55px">4</span><span class="td" style="left:105px">知识标题6</span>
<div class="pic"><svg width="100" height="100" viewBox="0 0 100 100"><defs><linearGradient id="gg" x1="0" y1="0" x2="1" y2=".3"><stop offset="0" stop-color="#2f7a20"/><stop offset=".5" stop-color="#1f6424"/><stop offset="1" stop-color="#0c4220"/></linearGradient></defs><rect width="100" height="100" fill="#fff"/><rect x="15.5" y="1.5" width="69" height="100" fill="#fdfdfd"/><g fill="none" stroke-linecap="round"><path d="M16 2 Q20 10 17 18 Q22 24 18 32 Q24 30 26 24 Q30 28 24 36 Q20 42 17 44" stroke="#8fb545" stroke-width="1.6"/><path d="M17 6 Q26 4 28 12 Q24 16 20 12 M22 22 Q30 18 32 26 M18 36 Q24 40 28 36" stroke="#9cc050" stroke-width="1.1"/><path d="M28 3 Q34 14 44 10 Q50 6 46 3 M36 12 Q40 22 32 24 M50 3 Q52 12 60 10" stroke="#a9bf8e" stroke-width="1.1"/><path d="M58 2 Q64 12 74 10 Q82 8 84 2 M60 14 Q56 22 62 26 Q68 24 64 18 M70 12 Q76 20 72 28 M80 6 Q84 16 80 26" stroke="#9fb78a" stroke-width="1.6"/><path d="M16 40 Q22 44 24 50 M78 22 Q74 30 76 34" stroke="#b4c89a" stroke-width="1"/></g><circle cx="63" cy="22" r="3" fill="#a9bf8e"/><circle cx="20" cy="28" r="2.6" fill="#7aa62e"/><circle cx="27" cy="29" r="2" fill="#7aa62e"/><path d="M62 2 Q72 8 84 2 Z" fill="#a3ba8c"/><text x="33.5" y="41.5" font-family="Liberation Serif,Noto Serif CJK SC,serif" font-size="9.4" font-weight="900" fill="#111">性健康了</text><text x="42" y="54.2" font-family="Liberation Sans,Noto Sans CJK SC,sans-serif" font-size="11.6" font-weight="900" fill="#0a0a0a" letter-spacing="-.3">才健康</text><rect x="39.5" y="60" width="1.3" height="1.3" fill="#444"/><rect x="42" y="59.7" width="10.5" height="1.9" fill="#444" opacity=".85"/><rect x="54" y="59.7" width="8" height="1.9" fill="#444" opacity=".85"/><rect x="15.5" y="68" width="69" height="32.5" fill="url(#gg)"/><path d="M26 84 Q30 80 29 88 Q32 84 34 90 M20 94 Q28 90 34 96" fill="none" stroke="#4a9a2a" stroke-width="1" opacity=".7"/><circle cx="39" cy="92" r="2.2" fill="#3a78c8"/><circle cx="39" cy="92" r="1.1" fill="#a8d0f0"/><rect x="43" y="91.2" width="18" height="1.5" fill="#9ac8a0" opacity=".6"/></svg></div>
<span class="td" style="left:436px">知识要点6</span><span class="td" style="left:565px">注意事项6</span>
<span class="td" style="left:694px">无</span><span class="td" style="left:823px">无</span>
<span class="td" style="left:952px">6</span><span class="td" style="left:1081px">0</span><span class="td" style="left:1210px">6</span>
<div class="ops"><span class="btn b">查看</span><span class="btn g">修改</span><span class="btn b">查看评论</span><span class="btn r">删除</span></div>
</div>
<div class="tr" style="top:510px">
<span class="cb rcb"></span>
<span class="td" style="left:55px">5</span><span class="td" style="left:105px">知识标题5</span>
<div class="pic"><svg width="100" height="100" viewBox="0 0 100 100"><rect width="100" height="100" fill="#fff"/><rect x="0" y="0" width="100" height="70.5" fill="#3caf46"/><g fill="#f6fbf2"><ellipse cx="51" cy="17.5" rx="4.6" ry="9.6" transform="rotate(0 51 17.5)"/><ellipse cx="40" cy="16.5" rx="3.2" ry="7" transform="rotate(-14 40 16.5)"/><ellipse cx="61" cy="16.5" rx="3.2" ry="7" transform="rotate(14 61 16.5)"/><ellipse cx="31" cy="17.8" rx="2.8" ry="5.6" transform="rotate(-38 31 17.8)"/><ellipse cx="70" cy="17.8" rx="2.8" ry="5.6" transform="rotate(38 70 17.8)"/><ellipse cx="28" cy="28.5" rx="7.4" ry="4.6" transform="rotate(18 28 28.5)"/><ellipse cx="74" cy="28.5" rx="7.4" ry="4.6" transform="rotate(-18 74 28.5)"/><ellipse cx="42.5" cy="31" rx="3.6" ry="6.4" transform="rotate(-38 42.5 31)"/><ellipse cx="59" cy="31" rx="3.6" ry="6.4" transform="rotate(38 59 31)"/><ellipse cx="21" cy="38" rx="4.6" ry="3" transform="rotate(0 21 38)"/><ellipse cx="79" cy="38" rx="4.6" ry="3" transform="rotate(0 79 38)"/><ellipse cx="36" cy="43" rx="7.8" ry="4.6" transform="rotate(0 36 43)"/><ellipse cx="66" cy="43" rx="7.8" ry="4.6" transform="rotate(0 66 43)"/><ellipse cx="27" cy="52.5" rx="6.2" ry="3.4" transform="rotate(-22 27 52.5)"/><ellipse cx="75" cy="52.5" rx="6.2" ry="3.4" transform="rotate(22 75 52.5)"/><ellipse cx="39" cy="54.5" rx="3" ry="5.2" transform="rotate(35 39 54.5)"/><ellipse cx="62" cy="54.5" rx="3" ry="5.2" transform="rotate(-35 62 54.5)"/><path d="M43 70.5 Q47.5 62 47.5 50 L45 42 L48.5 46 L50.5 34 L52.5 46 L56.5 41 L54.5 50 Q54.5 62 57 70.5 Z"/></g><text x="50" y="90.6" text-anchor="middle" font-family="Liberation Sans,Noto Sans CJK SC,sans-serif" font-size="15.6" font-weight="700" fill="#555" stroke="#555" stroke-width=".35" letter-spacing="3" dx="1.5">健康管理</text></svg></div>
<span class="td" style="left:436px">知识要点5</span><span class="td" style="left:565px">注意事项5</span>
<span class="td" style="left:694px">无</span><span class="td" style="left:823px">无</span>
<span class="td" style="left:952px">5</span><span class="td" style="left:1081px">0</span><span class="td" style="left:1210px">5</span>
<div class="ops"><span class="btn b">查看</span><span class="btn g">修改</span><span class="btn b">查看评论</span><span class="btn r">删除</span></div>
</div>
<div class="tr" style="top:625px">
<span class="cb rcb"></span>
<span class="td" style="left:55px">6</span><span class="td" style="left:105px">知识标题4</span>
<div class="pic"><svg width="100" height="100" viewBox="0 0 100 100"><rect width="100" height="100" fill="#fff"/><g transform="translate(13.7 0)"><path d="M3 13 Q4 25 18 24" fill="none" stroke="#3a2a48" stroke-width="3.2" stroke-linecap="round"/><path d="M17 2 Q22 3 19.5 13 L17.5 19 Q15.5 22 16 15 Q14.5 6 17 2 Z" fill="#2e2238"/><path d="M17.5 14 L16.8 21 L19 15 Z" fill="#8ac83a"/><rect x="27" y="2.6" width="5" height="1.8" fill="#d84a6a"/><rect x="33" y="2.9" width="14" height="1.2" fill="#999"/><rect x="25" y="11" width="24" height="1.6" fill="#333"/><rect x="25" y="13.8" width="24" height="1.6" fill="#444"/><rect x="25" y="16.6" width="24" height="1.6" fill="#444"/><rect x="25" y="19.2" width="12" height="1.3" fill="#666"/><path d="M64 2 Q68 2 69 10 Q70 18 68 19 Q65 14 63 6 Z" fill="#1c4a1c"/><path d="M51 11 Q58 12 64 20 Q66 25 62 25 Q56 22 51 11 Z" fill="#2a6a20"/><path d="M57 14 L63 22 M55 16 L61 24" stroke="#8ae040" stroke-width="1.2"/><ellipse cx="65.5" cy="28.5" rx="3" ry="3.6" fill="#5ab030"/><ellipse cx="65.5" cy="28" rx="1.6" ry="2" fill="#a8e060"/><rect x="20" y="24" width="35" height="76" fill="#b6e414"/><rect x="21" y="26.5" width="13" height="3" fill="#e4f4a0" opacity=".8"/><text x="37.5" y="47.5" text-anchor="middle" font-family="Liberation Sans,Noto Sans CJK SC,sans-serif" font-size="15" font-weight="900" fill="#fff" transform="rotate(-10 37.5 42)">吃</text><ellipse cx="12.5" cy="39" rx="5.4" ry="5.6" fill="#f0920e"/><ellipse cx="11" cy="37" rx="2.4" ry="2.6" fill="#ffc030"/><rect x="12" y="32" width="1.2" height="2.6" fill="#5a7a20"/><ellipse cx="7" cy="52" rx="4.6" ry="7" fill="#f07a10"/><rect x="4" y="44" width="1.4" height="3" fill="#5a7a20"/></g></svg></div>
<span class="td" style="left:436px">知识要点4</span><span class="td" style="left:565px">注意事项4</span>
<span class="td" style="left:694px">无</span><span class="td" style="left:823px">无</span>
<span class="td" style="left:952px">4</span><span class="td" style="left:1081px">0</span><span class="td" style="left:1210px">4</span>
<div class="ops"><span class="btn b">查看</span><span class="btn g">修改</span><span class="btn b">查看评论</span><span class="btn r">删除</span></div>
</div>

    </div>
  </div>
</div>
</body>
</html>
